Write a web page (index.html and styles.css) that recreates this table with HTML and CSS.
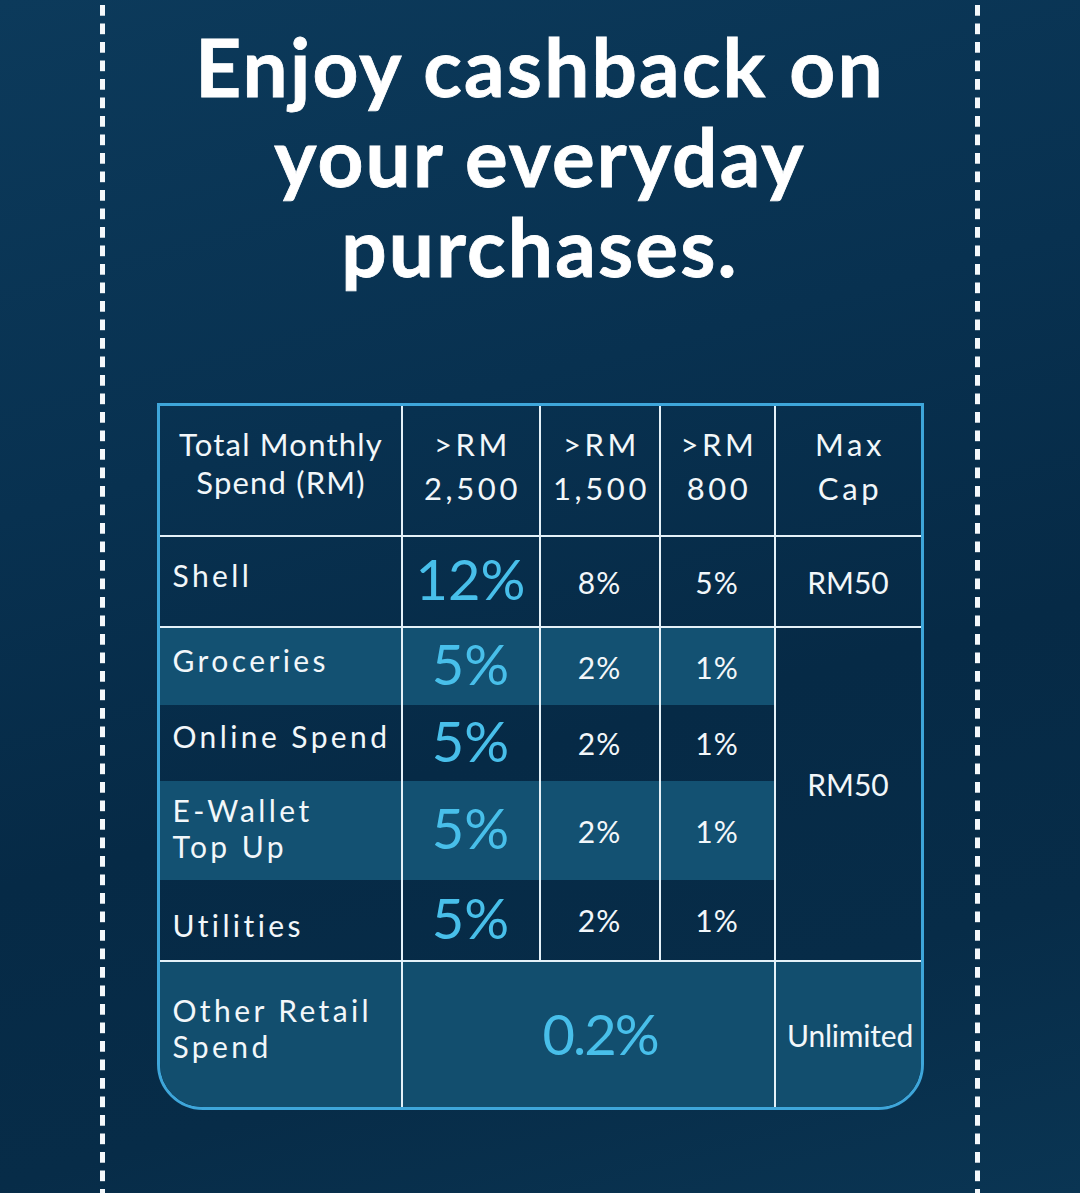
FILE: index.html
```html
<!DOCTYPE html>
<html lang="en">
<head>
<meta charset="utf-8">
<title>Cashback</title>
<link rel="stylesheet" href="styles.css">
</head>
<body>
<div class="page">
  <div class="dash"></div>
  <main class="content">
    <h1 class="title">Enjoy cashback on<br>your everyday<br>purchases.</h1>
    <div class="table-wrap">
      <div class="grid">
        <div class="cell head-first br bb">Total Monthly<br>Spend (RM)</div>
        <div class="cell head br bb">&gt;RM<br>2,500</div>
        <div class="cell head br bb">&gt;RM<br>1,500</div>
        <div class="cell head br bb">&gt;RM<br>800</div>
        <div class="cell head bb">Max<br>Cap</div>

        <div class="cell lbl br bb">Shell</div>
        <div class="cell big br bb">12%</div>
        <div class="cell val br bb">8%</div>
        <div class="cell val br bb">5%</div>
        <div class="cell cap bb">RM50</div>

        <div class="cell lbl alt br">Groceries</div>
        <div class="cell big alt br">5%</div>
        <div class="cell val alt br">2%</div>
        <div class="cell val alt br">1%</div>
        <div class="cell cap merged bb">RM50</div>

        <div class="cell lbl br">Online Spend</div>
        <div class="cell big br">5%</div>
        <div class="cell val br">2%</div>
        <div class="cell val br">1%</div>

        <div class="cell lbl two alt br">E-Wallet<br>Top Up</div>
        <div class="cell big alt br">5%</div>
        <div class="cell val alt br">2%</div>
        <div class="cell val alt br">1%</div>

        <div class="cell lbl low br bb">Utilities</div>
        <div class="cell big br bb">5%</div>
        <div class="cell val br bb">2%</div>
        <div class="cell val br bb">1%</div>

        <div class="cell lbl two other br">Other Retail<br>Spend</div>
        <div class="cell big other wide br">0.2%</div>
        <div class="cell cap other unl">Unlimited</div>
      </div>
    </div>
  </main>
  <div class="dash"></div>
</div>
</body>
</html>
```

FILE: styles.css
```css
html, body {
  margin: 0;
  padding: 0;
}

body {
  width: 1080px;
  height: 1193px;
  overflow: hidden;
  background: linear-gradient(165deg, #0c3a5b 0%, #083150 35%, #062a46 60%, #072c48 80%, #0a3553 100%);
  font-family: "Lato", "Liberation Sans", sans-serif;
  color: #f2f7fa;
}

.page {
  display: flex;
  height: 1193px;
  padding: 0 100px;
  box-sizing: border-box;
}

.dash {
  width: 5px;
  flex: 0 0 5px;
  background-image: linear-gradient(to bottom, #f4f8fb 0 11px, transparent 11px 100%);
  background-size: 5px 18.5px;
  background-position: 0 5px;
  background-repeat: repeat-y;
}

.content {
  flex: 1;
  display: flex;
  flex-direction: column;
  align-items: center;
}

.title {
  margin: 0;
  padding-top: 21px;
  font-size: 80px;
  line-height: 90px;
  font-weight: 700;
  letter-spacing: 2.2px;
  color: #ffffff;
  text-align: center;
  -webkit-text-stroke: 0.8px #ffffff;
}

.table-wrap {
  margin-top: 112px;
  width: 767px;
  box-sizing: border-box;
  border: 3px solid #3ea6da;
  border-radius: 0 0 46px 46px;
  overflow: hidden;
}

.grid {
  display: grid;
  grid-template-columns: 243px 138px 120px 115px 145px;
  grid-template-rows: 131px 91px 77px 76px 99px 82px 145px;
}

.cell {
  box-sizing: border-box;
  display: flex;
  align-items: center;
  justify-content: center;
  text-align: center;
  font-size: 30px;
  font-weight: 400;
}

.br { border-right: 2px solid #e4f1f8; }
.bb { border-bottom: 2px solid #e4f1f8; }

.alt { background: #135172; }
.other { background: #124e6e; }

.head-first {
  font-size: 31px;
  line-height: 38px;
  letter-spacing: 1.2px;
  padding-left: 2px;
  padding-bottom: 16px;
}

.head {
  font-size: 31px;
  line-height: 44px;
  letter-spacing: 3.6px;
  padding-left: 4px;
  padding-bottom: 10px;
}

.lbl {
  justify-content: flex-start;
  text-align: left;
  padding-left: 13px;
  letter-spacing: 3.4px;
  padding-bottom: 14px;
}

.lbl.two {
  line-height: 36px;
  padding-bottom: 6px;
}

.lbl.low {
  padding-bottom: 0;
  padding-top: 10px;
}

.lbl.other {
  padding-bottom: 14px;
}

.big {
  font-size: 56px;
  font-weight: 400;
  color: #48bfea;
  padding-bottom: 6px;
}

.val {
  letter-spacing: 1px;
}

.cap {
  letter-spacing: 0;
}

.merged {
  grid-row: span 4;
  padding-bottom: 20px;
}

.wide {
  grid-column: span 3;
  letter-spacing: -2px;
  padding-left: 24px;
  padding-bottom: 2px;
}

.unl {
  letter-spacing: -0.2px;
  font-size: 30px;
  padding-left: 4px;
}
```
